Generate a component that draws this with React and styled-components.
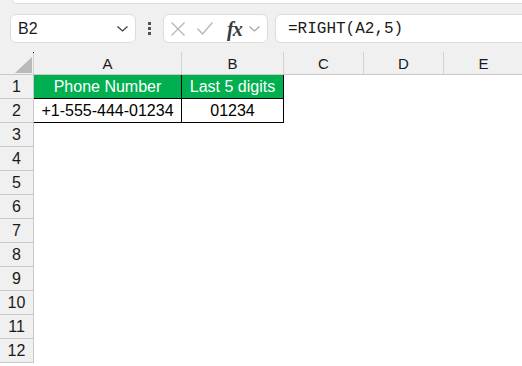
import React from 'react';
import styled, { createGlobalStyle } from 'styled-components';

const GlobalStyle = createGlobalStyle`
  body {
    margin: 0;
    background: #ffffff;
    font-family: "Liberation Sans", Arial, sans-serif;
  }
`;

const Page = styled.div`
  width: 522px;
  height: 366px;
  overflow: hidden;
  background: #ffffff;
`;

const Toolbar = styled.div`
  height: 52px;
  background: #f0f0f0;
  overflow: hidden;
`;

const RibbonEdge = styled.div`
  height: 3px;
  margin-left: 12px;
  background: #ffffff;
  border: 1px solid #dedede;
  border-top: none;
  border-right: none;
  border-bottom-left-radius: 6px;
`;

const ToolRow = styled.div`
  display: flex;
  align-items: center;
  margin-top: 10px;
  padding-left: 10px;
  margin-right: -20px;
`;

const Box = styled.div`
  box-sizing: border-box;
  height: 29px;
  background: #ffffff;
  border: 1px solid #dcdcdc;
  border-radius: 6px;
  display: flex;
  align-items: center;
`;

const NameBox = styled(Box)`
  width: 126px;
  justify-content: space-between;
  padding: 0 7px 0 7px;
  font-size: 16px;
  color: #1a1a1a;
`;

const Dots = styled.div`
  width: 27px;
  display: flex;
  flex-direction: column;
  align-items: center;
  gap: 2px;

  span {
    width: 3px;
    height: 3px;
    background: #505050;
  }
`;

const FxBox = styled(Box)`
  width: 105px;
  padding-left: 6px;
`;

const Slot = styled.span`
  display: flex;
  align-items: center;
  margin-left: ${p => p.$ml || 0}px;
`;

const Fx = styled.span`
  font-family: "Liberation Serif", "DejaVu Serif", serif;
  font-style: italic;
  font-weight: bold;
  font-size: 20px;
  color: #3a3a3a;
  letter-spacing: -1px;
  line-height: 1;
`;

const FormulaBox = styled(Box)`
  flex: 1;
  margin-left: 7px;
  padding-left: 12px;
  font-family: "Liberation Mono", "DejaVu Sans Mono", monospace;
  font-size: 16px;
  color: #1a1a1a;
`;

const Sheet = styled.div`
  display: grid;
  grid-template-columns: 34px 148px 102px 80px 80px 80px;
  grid-template-rows: 23px;
  grid-auto-rows: 24px;
`;

const Corner = styled.div`
  position: relative;
  box-sizing: border-box;
  background: #f0f0f0;
  border-right: 1px solid #d2d2d2;
  border-bottom: 1px solid #c8c8c8;
  display: flex;
  align-items: flex-end;
  justify-content: flex-end;
  padding: 0 1px 1px 0;

  &::after {
    content: '';
    position: absolute;
    right: -1px;
    top: 0;
    width: 1px;
    height: 1px;
    background: #000000;
  }
`;

const Triangle = styled.div`
  width: 17px;
  height: 16px;
  background: #b9b9b9;
  clip-path: polygon(100% 0, 100% 100%, 0 100%);
`;

const ColHead = styled.div`
  box-sizing: border-box;
  background: #f0f0f0;
  border-right: 1px solid #d2d2d2;
  border-bottom: 1px solid #c8c8c8;
  display: flex;
  align-items: center;
  justify-content: center;
  font-size: 15px;
  color: #1a1a1a;
`;

const RowHead = styled.div`
  box-sizing: border-box;
  background: #f0f0f0;
  border-right: 1px solid #c8c8c8;
  border-bottom: 1px solid #c8c8c8;
  display: flex;
  align-items: center;
  justify-content: center;
  font-size: 16px;
  color: #1a1a1a;
`;

const Cell = styled.div`
  box-sizing: border-box;
  display: flex;
  align-items: center;
  justify-content: center;
  white-space: nowrap;
  font-size: 16px;
  background: ${p => (p.$header ? '#00b050' : '#ffffff')};
  color: ${p => (p.$header ? '#ffffff' : '#000000')};
  border-right: ${p => (p.$boxed ? '1px solid #000000' : 'none')};
  border-bottom: ${p => (p.$boxed ? '1px solid #000000' : 'none')};
`;

const Chevron = ({ color = '#404040' }) => (
  <svg width="11" height="6" viewBox="0 0 11 6">
    <polyline points="0.5,0.5 5.5,5 10.5,0.5" fill="none" stroke={color} strokeWidth="1.3" />
  </svg>
);

const columns = ['A', 'B', 'C', 'D', 'E'];

const data = [
  ['Phone Number', 'Last 5 digits'],
  ['+1-555-444-01234', '01234'],
];

const App = () => {
  const rows = Array.from({ length: 12 }, (_, i) => i + 1);
  return (
    <Page>
      <GlobalStyle />
      <Toolbar>
        <RibbonEdge />
        <ToolRow>
          <NameBox>
            <span>B2</span>
            <Slot>
              <Chevron />
            </Slot>
          </NameBox>
          <Dots>
            <span />
            <span />
            <span />
          </Dots>
          <FxBox>
            <Slot>
              <svg width="16" height="14" viewBox="0 0 16 14">
                <path d="M1.5 0.5 L14.5 13.5 M14.5 0.5 L1.5 13.5" stroke="#b4b4b4" strokeWidth="1.2" fill="none" />
              </svg>
            </Slot>
            <Slot $ml={11}>
              <svg width="16" height="13" viewBox="0 0 16 13">
                <polyline points="0.5,6.5 5.5,12 15.5,0.5" stroke="#b4b4b4" strokeWidth="1.2" fill="none" />
              </svg>
            </Slot>
            <Slot $ml={14}>
              <Fx>fx</Fx>
            </Slot>
            <Slot $ml={7}>
              <Chevron color="#a8a8a8" />
            </Slot>
          </FxBox>
          <FormulaBox>=RIGHT(A2,5)</FormulaBox>
        </ToolRow>
      </Toolbar>
      <Sheet>
        <Corner>
          <Triangle />
        </Corner>
        {columns.map(c => (
          <ColHead key={c}>{c}</ColHead>
        ))}
        {rows.map(r => {
          const values = data[r - 1];
          return (
            <React.Fragment key={r}>
              <RowHead>{r}</RowHead>
              {columns.map((c, ci) => (
                <Cell
                  key={c}
                  $header={r === 1 && ci < 2}
                  $boxed={!!values && ci < 2}
                >
                  {values && ci < 2 ? values[ci] : ''}
                </Cell>
              ))}
            </React.Fragment>
          );
        })}
      </Sheet>
    </Page>
  );
};

export default App;
